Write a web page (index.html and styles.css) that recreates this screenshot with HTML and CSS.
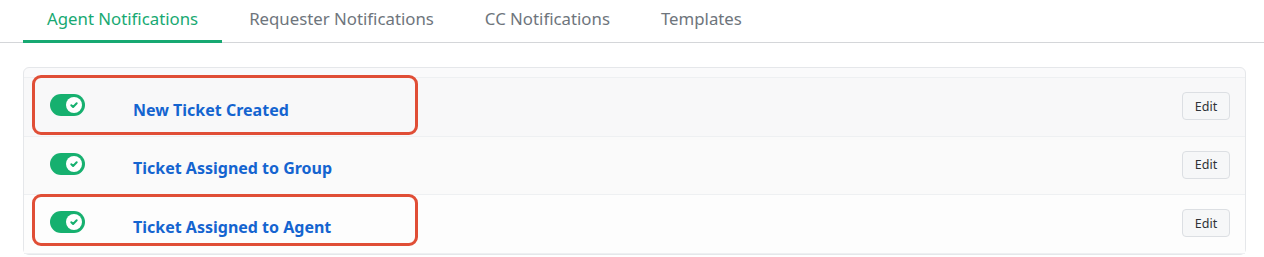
FILE: index.html
```html
<!DOCTYPE html>
<html lang="en">
<head>
  <meta charset="UTF-8">
  <title>Notifications</title>
  <link rel="stylesheet" href="styles.css">
</head>
<body>
  <div class="tabs">
    <a class="tab active">Agent Notifications</a>
    <a class="tab">Requester Notifications</a>
    <a class="tab">CC Notifications</a>
    <a class="tab">Templates</a>
  </div>

  <div class="panel">
    <div class="panel-head"></div>
    <div class="row row-a">
      <span class="toggle"><span class="knob"><svg viewBox="0 0 12 12"><path d="M3.3 6.2l1.8 1.8 3.6-3.8"/></svg></span></span>
      <a class="title">New Ticket Created</a>
      <button class="edit">Edit</button>
      <div class="mark mark-1"></div>
    </div>
    <div class="row row-b">
      <span class="toggle"><span class="knob"><svg viewBox="0 0 12 12"><path d="M3.3 6.2l1.8 1.8 3.6-3.8"/></svg></span></span>
      <a class="title">Ticket Assigned to Group</a>
      <button class="edit">Edit</button>
    </div>
    <div class="row row-c">
      <span class="toggle"><span class="knob"><svg viewBox="0 0 12 12"><path d="M3.3 6.2l1.8 1.8 3.6-3.8"/></svg></span></span>
      <a class="title">Ticket Assigned to Agent</a>
      <button class="edit">Edit</button>
      <div class="mark mark-2"></div>
    </div>
  </div>
</body>
</html>
```

FILE: styles.css
```css
body {
  margin: 0; background: #fff;
  font-family: 'Noto Sans', 'Open Sans', Arial, sans-serif;
}
.tabs {
  display: flex; padding-left: 23px; height: 42px;
  border-bottom: 1px solid #d4d6d9;
}
.tab {
  padding: 5px 24px 0; font-size: 16.8px; color: #6e757c;
  line-height: 27px; box-sizing: border-box; height: 43px; margin-right: 3px;
}
.tab.active { color: #17a972; border-bottom: 3px solid #17a972; }
.panel {
  margin: 24px 18px 0 23px; border: 1px solid #e5e7ea; border-radius: 6px;
  background: #fafafb;
}
.panel-head { height: 9px; border-bottom: 1px solid #eef0f2; }
.row {
  position: relative; display: flex; align-items: center;
  height: 58px; padding: 0 15px 0 26px; border-bottom: 1px solid #eef0f2;
}
.row-a { background: #f8f8f9; }
.row-b { background: #fafafa; height: 57px; }
.row-c { background: #fdfdfd; }
.toggle {
  width: 35px; height: 22px; border-radius: 11px; background: #16b06f;
  display: flex; align-items: center; justify-content: flex-end; padding-right: 3px;
  box-sizing: border-box; margin-top: -4px;
}
.knob {
  width: 16px; height: 16px; border-radius: 50%; background: #fff;
  display: flex; align-items: center; justify-content: center;
}
.knob svg { width: 12px; height: 12px; fill: none; stroke: #16b06f; stroke-width: 2; stroke-linecap: round; stroke-linejoin: round; }
.title {
  margin-left: 48px; margin-top: 5px; font-size: 16px; font-weight: 700; color: #1464d0;
  flex: 1;
}
.edit {
  font-family: inherit; font-size: 12.5px; color: #2f3337;
  background: #f6f7f8; border: 1px solid #dcdfe3; border-radius: 4px;
  width: 48px; height: 28px; padding: 0; margin-top: -2px;
}
.mark {
  position: absolute; left: 8px; width: 380px;
  border: 3px solid #e04e36; border-radius: 9px;
}
.mark-1 { top: -3px; height: 54px; }
.mark-2 { top: -1px; height: 46px; }
```
